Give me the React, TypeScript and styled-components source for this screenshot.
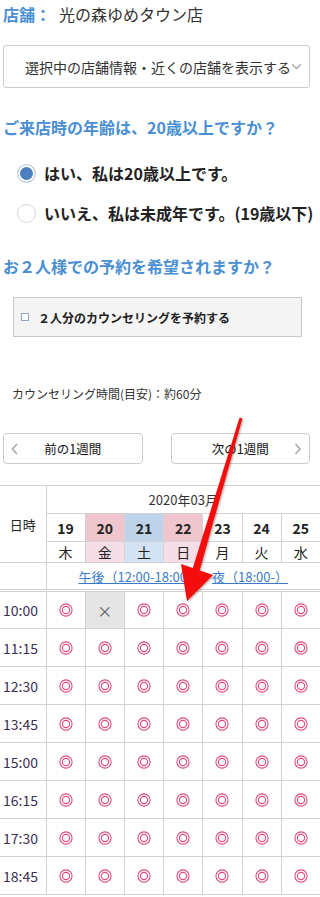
import React from 'react';
import styled, { createGlobalStyle } from 'styled-components';

const BLUE = '#4a8fd2';

const GlobalStyle = createGlobalStyle`
  html, body { margin: 0; padding: 0; background: #fff; }
  body {
    width: 320px;
    overflow: hidden;
    font-family: "Noto Sans CJK JP", "Noto Sans", sans-serif;
    color: #333;
  }
  * { box-sizing: border-box; }
`;

const Page = styled.div`
  position: relative;
  width: 320px;
  height: 897px;
  overflow: hidden;
`;

const Top = styled.div`
  padding: 0 10px 0 3px;
`;

const StoreRow = styled.div`
  display: flex;
  align-items: center;
  gap: 8px;
  padding-top: 4px;
  line-height: 20px;
  font-size: 16px;
`;

const StoreLabel = styled.span`
  color: ${BLUE};
  font-weight: bold;
`;

const StoreName = styled.span`
  color: #333;
`;

const SelectBox = styled.div`
  margin-top: 21px;
  height: 43px;
  border: 1px solid #ccc;
  border-radius: 3px;
  display: flex;
  align-items: center;
  padding-left: 21px;
  font-size: 14px;
  color: #333;
`;

const Question = styled.div<{ $mt: number }>`
  margin-top: ${(p) => p.$mt}px;
  font-size: 16px;
  line-height: 20px;
  font-weight: bold;
  color: ${BLUE};
  white-space: nowrap;
`;

const RadioList = styled.div`
  margin-top: 16px;
`;

const RadioRow = styled.div`
  height: 40px;
  display: flex;
  align-items: center;
  gap: 8px;
  padding-left: 14px;
  font-size: 16px;
  font-weight: bold;
  color: #222;
  white-space: nowrap;
`;

const RadioCircle = styled.span<{ $on?: boolean }>`
  flex: none;
  width: 19px;
  height: 19px;
  border-radius: 50%;
  border: 1px solid ${(p) => (p.$on ? '#c9d3df' : '#d6d6d6')};
  background: ${(p) => (p.$on ? '#4a7fc0' : '#fff')};
  box-shadow: ${(p) => (p.$on ? 'inset 0 0 0 2px #fff' : 'none')};
`;

const CheckPanel = styled.div`
  margin: 21px 0 0 10px;
  width: 289px;
  height: 40px;
  border: 1px solid #c8c8c8;
  background: #f4f4f4;
  display: flex;
  align-items: center;
  padding-left: 7px;
  gap: 9px;
  font-size: 12px;
  font-weight: bold;
  color: #222;
`;

const CheckSquare = styled.span`
  flex: none;
  width: 8px;
  height: 8px;
  border: 1px solid #8ea6c6;
  background: #fff;
`;

const Duration = styled.div`
  margin: 48px 0 0 9px;
  font-size: 12px;
  line-height: 18px;
  color: #333;
`;

const ButtonRow = styled.div`
  margin-top: 30px;
  display: flex;
  justify-content: space-between;
  width: 307px;
`;

const WeekButton = styled.div`
  width: 139.5px;
  height: 31px;
  border: 1px solid #ccc;
  border-radius: 4px;
  display: grid;
  grid-template-columns: 22px 1fr 22px;
  align-items: center;
  font-size: 12.5px;
  color: #111;
  background: #fff;
`;

const ButtonText = styled.span`
  grid-column: 2;
  text-align: center;
`;

const ChevronCell = styled.span<{ $col: number }>`
  grid-column: ${(p) => p.$col};
  grid-row: 1;
  display: flex;
  justify-content: center;
`;

const Table = styled.table`
  margin-top: 21px;
  width: 321px;
  border-collapse: collapse;
  table-layout: fixed;
  font-size: 13px;
  color: #333;
`;

const Cell = styled.td<{ $h?: number; $bg?: string; $thick?: boolean }>`
  border: 1px solid #d3d3d3;
  border-bottom: ${(p) => (p.$thick ? '3px double #cfcfcf' : '1px solid #d3d3d3')};
  height: ${(p) => p.$h ?? 28}px;
  padding: 0;
  text-align: center;
  vertical-align: middle;
  font-weight: normal;
  background: ${(p) => p.$bg ?? '#fff'};
  &:first-child { border-left: none; }
`;

const DayNum = styled(Cell)`
  font-size: 14px;
  font-weight: bold;
  color: #222;
`;

const WeekDay = styled(Cell)`
  font-size: 14px;
  color: #222;
`;

const MonthCell = styled(Cell)`
  font-size: 13px;
  color: #333;
`;

const CornerCell = styled(Cell)`
  font-size: 13px;
  color: #222;
`;

const LinkCell = styled(Cell)`
  font-size: 13px;
  white-space: nowrap;
`;

const PeriodLink = styled.a`
  color: #3b7bc7;
  text-decoration: underline;
  margin: 0 6px;
`;

const TimeCell = styled(Cell)`
  text-align: left;
  padding-left: 3px;
  font-size: 14px;
  color: #3b2f55;
`;

const SlotCell = styled(Cell)<{ $closed?: boolean }>`
  background: ${(p) => (p.$closed ? '#e5e5e5' : '#fff')};
  color: #555;
  font-size: 15px;
`;

const ArrowLayer = styled.svg`
  position: absolute;
  left: 0;
  top: 0;
  pointer-events: none;
`;

const Chevron = ({ dir }: { dir: 'left' | 'right' | 'down' }) => {
  if (dir === 'down')
    return (
      <svg width="11" height="7" viewBox="0 0 11 7">
        <path d="M1 1.2 L5.5 5.5 L10 1.2" fill="none" stroke="#aaa" strokeWidth="1.4" />
      </svg>
    );
  const d = dir === 'left' ? 'M6 1 L1.5 6 L6 11' : 'M1.5 1 L6 6 L1.5 11';
  return (
    <svg width="8" height="12" viewBox="0 0 8 12">
      <path d={d} fill="none" stroke="#aaa" strokeWidth="1.6" />
    </svg>
  );
};

const DoubleCircle = () => (
  <svg width="14" height="14" viewBox="0 0 14 14" style={{ display: 'block', margin: '0 auto' }}>
    <circle cx="7" cy="7" r="6.1" fill="none" stroke="#e04a7c" strokeWidth="1.1" />
    <circle cx="7" cy="7" r="3.6" fill="none" stroke="#e04a7c" strokeWidth="1.1" />
  </svg>
);

const days = [
  { n: '19', w: '木', bg: '#fff', wbg: '#fff' },
  { n: '20', w: '金', bg: '#f0c6ce', wbg: '#f6dde6' },
  { n: '21', w: '土', bg: '#bed2e9', wbg: '#d3e3f3' },
  { n: '22', w: '日', bg: '#f0c6ce', wbg: '#f6dde6' },
  { n: '23', w: '月', bg: '#fff', wbg: '#fff' },
  { n: '24', w: '火', bg: '#fff', wbg: '#fff' },
  { n: '25', w: '水', bg: '#fff', wbg: '#fff' },
];

const times = ['10:00', '11:15', '12:30', '13:45', '15:00', '16:15', '17:30', '18:45'];

export default function App() {
  return (
    <Page>
      <GlobalStyle />
      <Top>
        <StoreRow>
          <StoreLabel>店舗：</StoreLabel>
          <StoreName>光の森ゆめタウン店</StoreName>
        </StoreRow>
        <SelectBox>
          <span>選択中の店舗情報・近くの店舗を表示する</span>
          <Chevron dir="down" />
        </SelectBox>
        <Question $mt={29}>ご来店時の年齢は、20歳以上ですか？</Question>
        <RadioList>
          <RadioRow>
            <RadioCircle $on />
            <span>はい、私は20歳以上です。</span>
          </RadioRow>
          <RadioRow>
            <RadioCircle />
            <span>いいえ、私は未成年です。(19歳以下)</span>
          </RadioRow>
        </RadioList>
        <Question $mt={23}>お２人様での予約を希望されますか？</Question>
        <CheckPanel>
          <CheckSquare />
          <span>２人分のカウンセリングを予約する</span>
        </CheckPanel>
        <Duration>カウンセリング時間(目安)：約60分</Duration>
        <ButtonRow>
          <WeekButton>
            <ChevronCell $col={1}>
              <Chevron dir="left" />
            </ChevronCell>
            <ButtonText>前の1週間</ButtonText>
          </WeekButton>
          <WeekButton>
            <ButtonText>次の1週間</ButtonText>
            <ChevronCell $col={3}>
              <Chevron dir="right" />
            </ChevronCell>
          </WeekButton>
        </ButtonRow>
      </Top>
      <Table>
        <colgroup>
          <col style={{ width: 46 }} />
          {days.map((d) => (
            <col key={d.n} />
          ))}
        </colgroup>
        <thead>
          <tr>
            <CornerCell as="th" rowSpan={3}>日時</CornerCell>
            <MonthCell as="th" colSpan={7}>2020年03月</MonthCell>
          </tr>
          <tr>
            {days.map((d) => (
              <DayNum as="th" key={d.n} $bg={d.bg}>
                {d.n}
              </DayNum>
            ))}
          </tr>
          <tr>
            {days.map((d) => (
              <WeekDay as="th" key={d.n} $h={20} $bg={d.wbg}>
                {d.w}
              </WeekDay>
            ))}
          </tr>
          <tr>
            <Cell $thick />
            <LinkCell colSpan={7} $thick>
              <PeriodLink>午後（12:00-18:00）</PeriodLink>
              <PeriodLink>夜（18:00-）</PeriodLink>
            </LinkCell>
          </tr>
        </thead>
        <tbody>
          {times.map((t, ri) => (
            <tr key={t}>
              <TimeCell $h={38}>{t}</TimeCell>
              {days.map((d, ci) => {
                const closed = ri === 0 && ci === 1;
                return (
                  <SlotCell key={d.n} $h={38} $closed={closed}>
                    {closed ? '×' : <DoubleCircle />}
                  </SlotCell>
                );
              })}
            </tr>
          ))}
        </tbody>
      </Table>
      <ArrowLayer width="320" height="897" viewBox="0 0 320 897">
        <defs>
          <filter id="sh" x="-20%" y="-20%" width="140%" height="140%">
            <feDropShadow dx="1" dy="1" stdDeviation="1" floodColor="#000" floodOpacity="0.35" />
          </filter>
        </defs>
        <g filter="url(#sh)" fill="#f50a0a">
          <polygon points="239.6,417.6 242.4,418.4 199.5,571 192.5,569" />
          <polygon points="181,564 213,575 187,601" />
        </g>
      </ArrowLayer>
    </Page>
  );
}
